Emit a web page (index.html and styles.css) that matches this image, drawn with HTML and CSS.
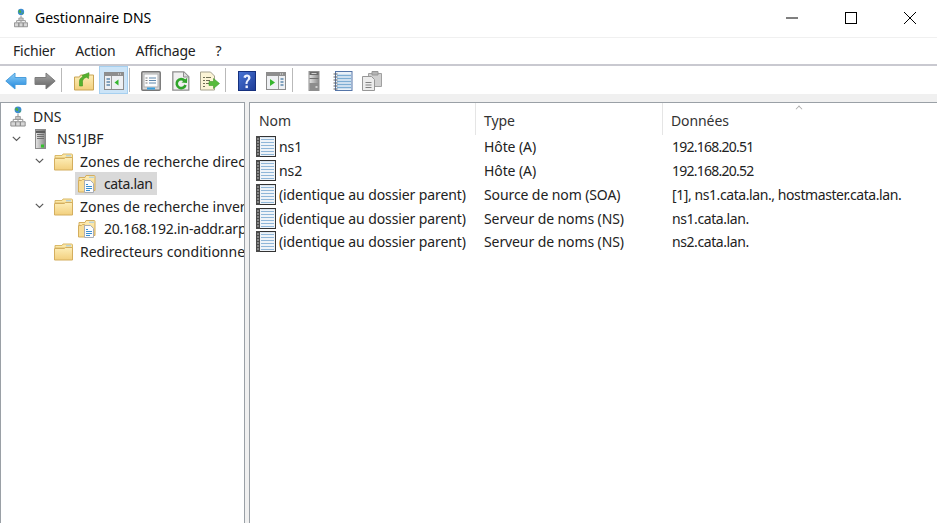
FILE: index.html
```html
<!DOCTYPE html>
<html lang="fr">
<head>
<meta charset="utf-8">
<title>Gestionnaire DNS</title>
<link rel="stylesheet" href="styles.css">
</head>
<body>
<svg class="sprite" aria-hidden="true">
  <defs>
    <linearGradient id="gFolder" x1="0" y1="0" x2="0" y2="1"><stop offset="0" stop-color="#fdeeb8"/><stop offset="1" stop-color="#f2cf7d"/></linearGradient>
    <linearGradient id="gBlue" x1="0" y1="0" x2="0" y2="1"><stop offset="0" stop-color="#8fd0f8"/><stop offset="1" stop-color="#1f86dc"/></linearGradient>
    <linearGradient id="gGrey" x1="0" y1="0" x2="0" y2="1"><stop offset="0" stop-color="#a8a8a8"/><stop offset="1" stop-color="#606060"/></linearGradient>
    <linearGradient id="gServer" x1="0" y1="0" x2="1" y2="0"><stop offset="0" stop-color="#e6e6e6"/><stop offset="1" stop-color="#8a8a8a"/></linearGradient>
    <linearGradient id="gHelp" x1="0" y1="0" x2="1" y2="1"><stop offset="0" stop-color="#4a76d8"/><stop offset="1" stop-color="#1c3a94"/></linearGradient>
    <symbol id="i-dns" viewBox="0 0 16 22">
      <path d="M8 8v6M3 14h10M3 14v2M13 14v2M8 14v2" stroke="#8a8a8a" fill="none"/>
      <circle cx="8" cy="4" r="3.6" fill="#3c8ccf"/>
      <path d="M6 1.500c2 .5 3 2 2 3.500-1 .5-2 0-3-1zM9 5.500l2-.8-.8 2.200z" fill="#4fae3f"/>
      <path d="M5.500 11h5v3h-5z" fill="#c8c8c8" stroke="#8f8f8f" stroke-width=".8"/>
      <path d="M.5 16.500h5v4.500h-5zM5.500 16.500h5v4.500h-5zM10.500 16.500h5v4.500h-5z" fill="#d6d6d6" stroke="#8c8c8c"/>
    </symbol>
    <symbol id="i-server" viewBox="0 0 11 20">
      <rect x=".5" y=".5" width="10" height="19" fill="url(#gServer)" stroke="#8a8a8a"/>
      <path d="M1 1.500h9v2.500H1z" fill="#5c5c5c"/>
      <path d="M2 5.500h7M2 7.500h7M2 9.500h7" stroke="#6e6e6e"/>
      <rect x="6" y="15.500" width="3" height="3" fill="#35c22d"/>
    </symbol>
    <symbol id="i-server-t" viewBox="0 0 11 20">
      <rect x=".5" y=".5" width="10" height="19" fill="url(#gServer)" stroke="#8f8f8f"/>
      <path d="M1 1h9v3H1z" fill="#6a6a6a"/>
      <path d="M3 2.500h5" stroke="#d0d0d0"/>
      <path d="M1 7.500h9" stroke="#6e6e6e"/>
      <path d="M1 12h9v7H1z" fill="#8d8d8d"/>
      <rect x="7" y="15" width="2" height="2" fill="#cfcfcf"/>
    </symbol>
    <symbol id="i-folder" viewBox="0 0 19 19">
      <path d="M1 3.500h7l1-1.500h8.500a1 1 0 0 1 1 1v3H1z" fill="#fbe7a6" stroke="#d9b968"/>
      <path d="M12 3.300h5v1h-5z" fill="#9cc7ea"/>
      <path d="M.5 6.500h10l1-1h7v12.500H.5z" fill="url(#gFolder)" stroke="#d4ae5e"/>
    </symbol>
    <symbol id="i-zone" viewBox="0 0 18 19">
      <path d="M1 3.500h6l1-2h8a1 1 0 0 1 1 1v14H1z" fill="url(#gFolder)" stroke="#d4ae5e"/>
      <path d="M11 2.700h5v1h-5z" fill="#9cc7ea"/>
      <path d="M.5 6.500h3l1-1h2v12.500H.5z" fill="#f8dd96" stroke="#d4ae5e"/>
      <path d="M6.500 6.500h6l3 3v9h-9z" fill="#fbfcfe" stroke="#a9adb5"/>
      <path d="M8 10.500h2M8 12.500h6M8 14.500h6M8 16.500h4" stroke="#3a8fd0"/>
    </symbol>
    <symbol id="i-record" viewBox="0 0 20 21">
      <rect x=".5" y=".5" width="19" height="20" fill="#eef3f8" stroke="#333"/>
      <rect x="0" y="0" width="4" height="21" fill="#4a4a4a"/>
      <path d="M1 3h2M1 6h2M1 9h2M1 12h2M1 15h2M1 18h2" stroke="#c4c4c4"/>
      <path d="M5 3.500h13M5 6.500h13M5 9.500h13M5 12.500h13M5 15.500h13M5 18.500h13" stroke="#8fb6d8"/>
      <path d="M5 1.500h14" stroke="#d8e4ef"/>
    </symbol>
    <symbol id="i-back" viewBox="0 0 22 18">
      <path d="M.8 9 10 1v4.500h11v7H10V17z" fill="url(#gBlue)" stroke="#4b9edc"/>
    </symbol>
    <symbol id="i-forward" viewBox="0 0 22 18">
      <path d="M21.200 9 12 1v4.500H1v7h11V17z" fill="url(#gGrey)" stroke="#7d7d7d"/>
    </symbol>
    <symbol id="i-up" viewBox="0 0 20 19">
      <path d="M.5 5.500h5l1-2h13v15H.500z" fill="url(#gFolder)" stroke="#c9a455"/>
      <path d="M5.500 14.500V9.500c0-2 1.500-3.500 3.500-4L8 4l7-2.800-.5 5.800-2-1.300C10 6.500 8.500 8 8.500 10v4.500z" fill="#55b22e" stroke="#3f9420" stroke-width=".6"/>
    </symbol>
    <symbol id="i-pane" viewBox="0 0 20 18">
      <rect x=".5" y=".5" width="19" height="17" fill="#eef0f3" stroke="#8c8c8c"/>
      <rect x="1" y="1" width="18" height="3" fill="#8e8e8e"/>
      <path d="M14 2h1M16 2h1" stroke="#e8e8e8"/>
      <path d="M7.500 4v13" stroke="#9a9a9a"/>
      <path d="M2.500 7h3.500M2.500 10h3.500M2.500 13h3.500" stroke="#5f88ad" stroke-width="1.400"/>
      <path d="M14.500 7.500v6l-4-3z" fill="#35b52d"/>
    </symbol>
    <symbol id="i-pane2" viewBox="0 0 20 18">
      <rect x=".5" y=".5" width="19" height="17" fill="#eef0f3" stroke="#8c8c8c"/>
      <rect x="1" y="1" width="18" height="3" fill="#8e8e8e"/>
      <path d="M14 2h1M16 2h1" stroke="#e8e8e8"/>
      <path d="M12.500 4v13" stroke="#9a9a9a"/>
      <path d="M14.500 7h3M14.500 10h3M14.500 13h3" stroke="#5f88ad" stroke-width="1.400"/>
      <path d="M4 7v7l5-3.500z" fill="#35b52d"/>
    </symbol>
    <symbol id="i-list" viewBox="0 0 20 20">
      <rect x=".8" y=".8" width="18.400" height="18.400" rx="1" fill="#d8d8d8" stroke="#777" stroke-width="1.500"/>
      <rect x="3" y="3" width="14" height="13" fill="#fbfcfd" stroke="#b0b0b0"/>
      <path d="M8 7h7M8 9.500h7M8 12h7" stroke="#5f88ad"/>
      <path d="M4.500 7h2M4.500 9.500h2M4.500 12h2" stroke="#7f7f7f"/>
      <path d="M6 17.500h8" stroke="#39a0e0" stroke-width="2"/>
    </symbol>
    <symbol id="i-refresh" viewBox="0 0 18 20">
      <path d="M.8.800h11l5 5v13.400H.8z" fill="#f0f0f0" stroke="#8f8f8f" stroke-width="1.300"/>
      <path d="M11.500 1v5h5" fill="#dcdcdc" stroke="#8f8f8f"/>
      <path d="M12.500 9.500A4.500 4.500 0 1 0 13.500 14" fill="none" stroke="#2fa52a" stroke-width="2.600"/>
      <path d="M9.500 11.500l5.500.6.200-5.300z" fill="#2fa52a"/>
    </symbol>
    <symbol id="i-export" viewBox="0 0 20 19">
      <path d="M.5.500h10l4 4v14H.5z" fill="#fbf4d6" stroke="#a5a28e"/>
      <path d="M3 6h2M6 6h5M3 9h2M6 9h4M3 12h2M6 12h3M3 15h2" stroke="#6f6f55"/>
      <path d="M19.500 12 13.500 7v3H9v4h4.500v3z" fill="#58bb3c" stroke="#419a2a" stroke-width=".6"/>
    </symbol>
    <symbol id="i-help" viewBox="0 0 18 20">
      <rect width="18" height="20" fill="url(#gHelp)"/>
      <rect x=".5" y=".5" width="17" height="19" fill="none" stroke="#16307e"/>
      <path d="M5.500 6.500c0-4 7-4 7 0 0 3-3 3-3 6.500H7.500c0-4 2.500-4 2.500-6.300 0-1.300-2-1.300-2 .3z" fill="#eef2ff"/>
      <rect x="7.500" y="14.500" width="2.400" height="2.600" fill="#eef2ff"/>
    </symbol>
    <symbol id="i-notebook" viewBox="0 0 19 20">
      <rect x="2" y=".5" width="16.500" height="19" fill="#e9f1f8" stroke="#5575a8"/>
      <path d="M3.500 4.500h14M3.500 7.500h14M3.500 10.500h14M3.500 13.500h14M3.500 16.500h14" stroke="#7dadd3" stroke-width="1.400"/>
      <path d="M0 3h4M0 6h4M0 9h4M0 12h4M0 15h4M0 18h4" stroke="#606060"/>
    </symbol>
    <symbol id="i-copies" viewBox="0 0 20 20">
      <path d="M6.500 2.500h13v13h-13z" fill="#d0d0d0" stroke="#a0a0a0"/>
      <path d="M10 .5h6v3.500h-6z" fill="#b4b4b4" stroke="#969696"/>
      <path d="M.5 5.500h9l3 3v11H.5z" fill="#ececec" stroke="#979797"/>
      <path d="M3.500 11.500h6M3.500 14h6M3.500 16.500h6" stroke="#808080"/>
    </symbol>
    <symbol id="i-chev" viewBox="0 0 9 6"><path d="M.8.800 4.500 4.500 8.200.8" fill="none" stroke="#5a5a5a" stroke-width="1.200"/></symbol>
  </defs>
</svg>

<div class="window">
  <header class="titlebar">
    <svg class="title-icon"><use href="#i-dns"/></svg>
    <span class="title-text">Gestionnaire DNS</span>
    <div class="win-btns">
      <svg class="win-btn" viewBox="0 0 12 12"><path d="M0 6h12" stroke="#000" fill="none"/></svg>
      <svg class="win-btn" viewBox="0 0 12 12"><rect x=".5" y=".5" width="11" height="11" stroke="#000" fill="none"/></svg>
      <svg class="win-btn" viewBox="0 0 12 12"><path d="M0 0l12 12M12 0 0 12" stroke="#000" fill="none"/></svg>
    </div>
  </header>

  <nav class="menubar">
    <span>Fichier</span><span>Action</span><span>Affichage</span><span>?</span>
  </nav>

  <div class="toolbar">
    <div class="tool"><svg class="ic-arrow"><use href="#i-back"/></svg></div>
    <div class="tool"><svg class="ic-arrow"><use href="#i-forward"/></svg></div>
    <div class="sep sep-wide"></div>
    <div class="tool tool-after"><svg class="ic-20"><use href="#i-up"/></svg></div>
    <div class="tool active"><svg class="ic-20"><use href="#i-pane"/></svg></div>
    <div class="sep"></div>
    <div class="tool tool-after-s"><svg class="ic-20"><use href="#i-list"/></svg></div>
    <div class="tool tool-nudge"><svg class="ic-20"><use href="#i-refresh"/></svg></div>
    <div class="tool"><svg class="ic-20"><use href="#i-export"/></svg></div>
    <div class="sep"></div>
    <div class="tool tool-after-s"><svg class="ic-20"><use href="#i-help"/></svg></div>
    <div class="tool"><svg class="ic-20"><use href="#i-pane2"/></svg></div>
    <div class="sep sep-wide"></div>
    <div class="tool tool-after-s"><svg class="ic-20"><use href="#i-server-t"/></svg></div>
    <div class="tool"><svg class="ic-20"><use href="#i-notebook"/></svg></div>
    <div class="tool"><svg class="ic-20"><use href="#i-copies"/></svg></div>
  </div>

  <main class="panes">
    <aside class="tree">
      <div class="node">
        <svg class="ic-dns"><use href="#i-dns"/></svg>
        <span class="label">DNS</span>
      </div>
      <div class="node d0">
        <svg class="chev"><use href="#i-chev"/></svg>
        <svg class="ic-server"><use href="#i-server"/></svg>
        <span class="label">NS1JBF</span>
      </div>
      <div class="node d1">
        <svg class="chev"><use href="#i-chev"/></svg>
        <svg class="ic-folder"><use href="#i-folder"/></svg>
        <span class="label">Zones de recherche directes</span>
      </div>
      <div class="node d2">
        <div class="selected">
          <svg class="ic-zone"><use href="#i-zone"/></svg>
          <span class="label label-tight">cata.lan</span>
        </div>
      </div>
      <div class="node d1">
        <svg class="chev"><use href="#i-chev"/></svg>
        <svg class="ic-folder"><use href="#i-folder"/></svg>
        <span class="label">Zones de recherche inversée</span>
      </div>
      <div class="node d2">
        <div class="plain">
          <svg class="ic-zone"><use href="#i-zone"/></svg>
          <span class="label label-num">20.168.192.in-addr.arpa</span>
        </div>
      </div>
      <div class="node d1 no-chev">
        <svg class="ic-folder"><use href="#i-folder"/></svg>
        <span class="label">Redirecteurs conditionnels</span>
      </div>
    </aside>

    <section class="list">
      <div class="list-head">
        <div class="col">Nom</div>
        <div class="col">Type</div>
        <div class="col col-last">Données<span class="sort"></span></div>
      </div>
      <div class="row"><div class="cell-name"><svg class="ic-record"><use href="#i-record"/></svg>ns1</div><div class="cell">Hôte (A)</div><div class="cell cell-data cell-ip">192.168.20.51</div></div>
      <div class="row"><div class="cell-name"><svg class="ic-record"><use href="#i-record"/></svg>ns2</div><div class="cell">Hôte (A)</div><div class="cell cell-data cell-ip">192.168.20.52</div></div>
      <div class="row"><div class="cell-name"><svg class="ic-record"><use href="#i-record"/></svg>(identique au dossier parent)</div><div class="cell">Source de nom (SOA)</div><div class="cell cell-data cell-soa">[1], ns1.cata.lan., hostmaster.cata.lan.</div></div>
      <div class="row"><div class="cell-name"><svg class="ic-record"><use href="#i-record"/></svg>(identique au dossier parent)</div><div class="cell">Serveur de noms (NS)</div><div class="cell cell-data cell-soa">ns1.cata.lan.</div></div>
      <div class="row"><div class="cell-name"><svg class="ic-record"><use href="#i-record"/></svg>(identique au dossier parent)</div><div class="cell">Serveur de noms (NS)</div><div class="cell cell-data cell-soa">ns2.cata.lan.</div></div>
    </section>
  </main>
</div>
</body>
</html>
```

FILE: styles.css
```css
* { box-sizing: border-box; }
html, body { margin: 0; height: 100%; overflow: hidden; }
body {
  font-family: "Noto Sans", "Open Sans", sans-serif;
  font-size: 14px;
  color: #222;
  background: #fff;
}
.sprite { width: 0; height: 0; position: absolute; }
svg { display: block; flex: none; }

.window { display: flex; flex-direction: column; height: 523px; }

.titlebar {
  height: 38px;
  display: flex;
  align-items: center;
  padding: 0 21px 2px 14px;
  border-bottom: 1px solid #f0f0f0;
}
.title-icon { width: 14px; height: 20px; margin-right: 7px; }
.title-text { color: #000; }
.win-btns { margin-left: auto; display: flex; gap: 47px; }
.win-btn { width: 12px; height: 12px; }

.menubar {
  height: 28px;
  display: flex;
  align-items: center;
  gap: 20px;
  padding: 0 0 2px 13px;
  border-bottom: 2px solid #c9c9d0;
  letter-spacing: -.2px;
}

.toolbar {
  height: 28px;
  display: flex;
  align-items: center;
  padding: 0 0 0 1px;
}
.tool {
  width: 29px;
  height: 28px;
  display: flex;
  align-items: center;
  justify-content: center;
  padding-top: 2px;
}
.tool.active { background: #cce4f7; border: 1px solid #a6d0f0; margin-left: 1px; }
.tool-after { margin-left: 7px; }
.tool-after-s { margin-left: 6px; }
.tool-nudge { margin-left: 1px; }
.sep { width: 1px; height: 24px; background: #b9b9b9; margin-left: 1px; }
.sep-wide { margin-left: 2px; }
.ic-arrow { width: 22px; height: 18px; }
.ic-20 { width: 20px; height: 20px; }

.panes {
  flex: 1;
  min-height: 0;
  display: flex;
  gap: 4px;
  background: #f0f0f0;
  padding-top: 8px;
}

.tree {
  width: 245px;
  background: #fff;
  border: 1px solid #9aa0a6;
  border-bottom: 0;
  padding-top: 2px;
  overflow: hidden;
  white-space: nowrap;
}
.node {
  height: 22.5px;
  display: flex;
  align-items: center;
  padding-left: 9px;
}
.d0 { padding-left: 11px; }
.d1 { padding-left: 34px; }
.d2 { padding-left: 74px; }
.no-chev { padding-left: 53px; }
.chev { width: 9px; height: 6px; margin-right: 10px; }
.ic-dns { width: 16px; height: 21px; margin-right: 7px; }
.ic-server { width: 11px; height: 20px; margin-left: 4px; margin-right: 11px; }
.ic-folder { width: 19px; height: 19px; margin-right: 7px; }
.ic-zone { width: 18px; height: 19px; margin-right: 8px; }
.label-tight { letter-spacing: -.35px; }
.label-num { letter-spacing: -.2px; }
.selected, .plain {
  display: flex;
  align-items: center;
  height: 23px;
  padding: 0 4px 0 3px;
}
.selected { background: #d9d9d9; }

.list {
  flex: 1;
  min-width: 0;
  background: #fff;
  border: 1px solid #9aa0a6;
  border-right: 0;
  border-bottom: 0;
  letter-spacing: -.1px;
}
.list-head, .row {
  display: grid;
  grid-template-columns: 226px 187px 1fr;
}
.list-head { height: 32px; }
.col {
  display: flex;
  align-items: center;
  padding: 3px 0 0 8px;
  color: #333;
  border-right: 1px solid #e5e5e5;
  position: relative;
}
.col:first-child { padding-left: 9px; }
.col-last { border-right: 0; }
.sort {
  position: absolute;
  left: 133px;
  top: 3px;
  width: 6px;
  height: 6px;
  border-left: 1px solid #aaa;
  border-top: 1px solid #aaa;
  transform: rotate(45deg) scale(.8);
}
.row { height: 23.75px; align-items: center; }
.cell-name { display: flex; align-items: center; padding-left: 6px; white-space: nowrap; }
.cell { padding-left: 8px; white-space: nowrap; }
.cell-data { padding-left: 9px; }
.cell-ip { letter-spacing: -.75px; }
.cell-soa { letter-spacing: -.42px; }
.ic-record { width: 20px; height: 21px; margin-right: 3px; }
```
